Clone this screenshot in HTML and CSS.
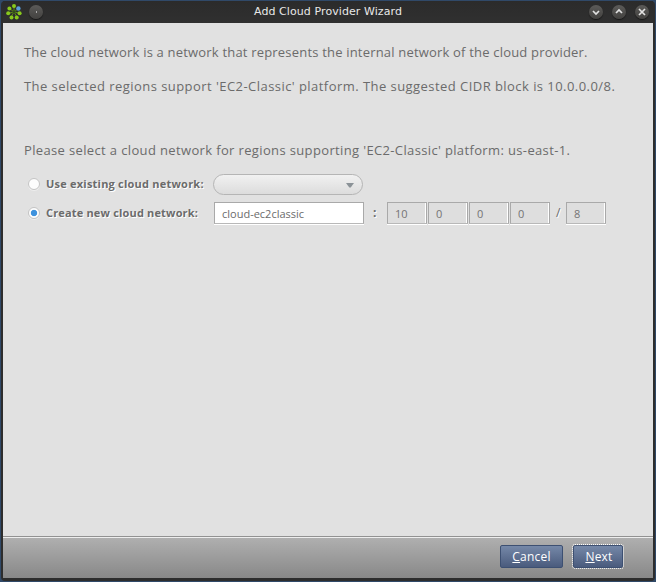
FILE: index.html
```html
<!DOCTYPE html>
<html lang="en">
<head>
<meta charset="utf-8">
<title>Add Cloud Provider Wizard</title>
<link rel="stylesheet" href="styles.css">
</head>
<body>
<div class="window">
  <header class="titlebar">
    <div class="title-left">
      <svg class="logo" width="18" height="18" viewBox="0 0 18 18">
        <g stroke="#5c8a18" stroke-width="1"><path d="M9 9V3M9 9l5-4M9 9l5 1M9 9l3 5M9 9l-3 5M9 9l-5 1M9 9L4 5"/></g>
        <g fill="#88c91c"><circle cx="9" cy="3" r="2"/><circle cx="14.6" cy="10.2" r="2"/><circle cx="11.7" cy="14.5" r="2"/><circle cx="6.5" cy="14.5" r="2"/><circle cx="3.2" cy="10.2" r="2"/><circle cx="4.4" cy="5.6" r="2"/></g>
        <circle cx="13.4" cy="5.5" r="2.2" fill="#579ddd"/>
        <circle cx="9" cy="9" r="1.3" fill="#315117"/>
      </svg>
      <span class="knob"><i class="dot"></i></span>
    </div>
    <h1 class="title">Add Cloud Provider Wizard</h1>
    <div class="title-right">
      <span class="knob"><svg width="14" height="14" viewBox="0 0 14 14"><path d="M4 6l3 3 3-3"/></svg></span>
      <span class="knob"><svg width="14" height="14" viewBox="0 0 14 14"><path d="M4 8l3-3 3 3"/></svg></span>
      <span class="knob"><svg width="14" height="14" viewBox="0 0 14 14"><path d="M4 4l6 6M10 4l-6 6"/></svg></span>
    </div>
  </header>
  <main class="content">
    <p class="line first">The cloud network is a network that represents the internal network of the cloud provider.</p>
    <p class="line second">The selected regions support 'EC2-Classic' platform. The suggested CIDR block is 10.0.0.0/8.</p>
    <p class="line third">Please select a cloud network for regions supporting 'EC2-Classic' platform: us-east-1.</p>
    <div class="row">
      <span class="radio"></span>
      <label class="label use">Use existing cloud network:</label>
      <div class="select"><svg width="8" height="5" viewBox="0 0 8 5"><path d="M0 0h8L4.7 4.6H3.3z" fill="#8b9297"/></svg></div>
    </div>
    <div class="row">
      <span class="radio on"></span>
      <label class="label create">Create new cloud network:</label>
      <div class="field name">cloud-ec2classic</div>
      <b class="colon">:</b>
      <div class="octets">
        <div class="field off">10</div>
        <div class="field off">0</div>
        <div class="field off">0</div>
        <div class="field off">0</div>
      </div>
      <span class="slash">/</span>
      <div class="field off">8</div>
    </div>
  </main>
  <footer class="footer">
    <div class="button cancel"><u>C</u>ancel</div>
    <div class="button next"><u>N</u>ext</div>
  </footer>
</div>
</body>
</html>
```
FILE: styles.css
```css
* { box-sizing: border-box; }
body {
  margin: 0;
  width: 656px;
  height: 582px;
  overflow: hidden;
  background: #304968;
  font-family: "Open Sans", "Noto Sans", sans-serif;
}
.window {
  width: 654px;
  height: 580px;
  margin: 1px;
  display: flex;
  flex-direction: column;
  background: #2d2d2d;
  border-radius: 4px;
  padding: 0 2px 3px;
}
.titlebar {
  height: 22px;
  flex: none;
  display: grid;
  grid-template-columns: 1fr auto 1fr;
  align-items: center;
  background: linear-gradient(#2b2b2b, #303030);
}
.title-left { display: flex; align-items: center; gap: 6px; padding-left: 2px; }
.title-right { display: flex; justify-content: flex-end; gap: 9px; padding-right: 4.5px; }
.title {
  margin: 0;
  font: 11px/20px "DejaVu Sans", sans-serif;
  letter-spacing: 0.08px;
  color: #e8e8e8;
  white-space: nowrap;
}
.knob {
  width: 14px;
  height: 14px;
  border-radius: 50%;
  background: linear-gradient(#5b5a58, #434240);
  box-shadow: 0 1px 1px #171717;
  display: flex;
  align-items: center;
  justify-content: center;
}
.knob path { fill: none; stroke: #e2e2e2; stroke-width: 1.7; }
.dot { width: 1px; height: 2px; background: #aaa; }
.content {
  flex: 1;
  background: #e1e1e1;
  padding: 19px 21px 0;
  color: #6b6b6b;
  border-bottom: 1px solid #929292;
}
.line { margin: 0; height: 20px; font-size: 13px; line-height: 20px; white-space: nowrap; }
.first { letter-spacing: 0.19px; }
.second { margin-top: 14px; letter-spacing: 0.45px; }
.third { margin: 44px 0 14px; letter-spacing: 0.36px; }
.row { display: flex; align-items: center; height: 20px; padding-left: 4px; }
.row + .row { margin-top: 8px; height: 22px; }
.radio {
  width: 12px;
  height: 12px;
  border-radius: 50%;
  border: 1px solid #c4c4c4;
  background: #fdfdfd;
  box-shadow: 0 1px 0 #eee;
  margin-right: 6px;
}
.on { background: radial-gradient(circle, #3e92dd 0 2.8px, #fdfdfd 3.6px); }
.label {
  width: 167px;
  font: bold 11px/18px "Open Sans", sans-serif;
  text-shadow: 1px 1px 0 #fff;
  white-space: nowrap;
}
.use { letter-spacing: 0.22px; }
.create { letter-spacing: 0.17px; }
.select {
  width: 150px;
  height: 21px;
  border: 1px solid #b5b5b5;
  border-radius: 11px;
  background: linear-gradient(#f1f1f1, #dcdcdc);
  display: flex;
  align-items: center;
  justify-content: flex-end;
  padding: 2px 8px 0 0;
}
.field {
  width: 40px;
  height: 22px;
  border: 1px solid #a9a9a9;
  border-bottom-color: #b8b8b8;
  background: #fff;
  box-shadow: inset -1px 0 #fff, 0 1px #fff;
  padding-left: 7px;
  font-size: 11px;
  line-height: 22px;
}
.off { background: #dedede; color: #747474; }
.name { width: 150px; margin-left: 1px; }
.colon { width: 23px; padding-left: 9px; font-size: 12px; line-height: 18px; text-shadow: 1px 1px #fff; }
.octets { display: flex; gap: 1px; }
.slash { width: 16px; padding-left: 6px; font-size: 12px; line-height: 18px; text-shadow: 1px 1px #fff; }
.footer {
  height: 41px;
  flex: none;
  border-top: 1px solid #eee;
  background: linear-gradient(#afafaf, #888);
  display: flex;
  align-items: flex-start;
  justify-content: flex-end;
  gap: 10px;
  padding: 7px 30px 0 0;
}
.button {
  height: 23px;
  border: 1px solid #3d5072;
  border-radius: 2px;
  background: linear-gradient(#7588a8, #4a5b7d);
  color: #fff;
  font-size: 12px;
  letter-spacing: 0.2px;
  line-height: 22px;
  text-align: center;
}
.cancel { width: 63px; }
.next { width: 50px; padding-left: 2px; outline: 1px dotted #fff; outline-offset: 0; }
```
